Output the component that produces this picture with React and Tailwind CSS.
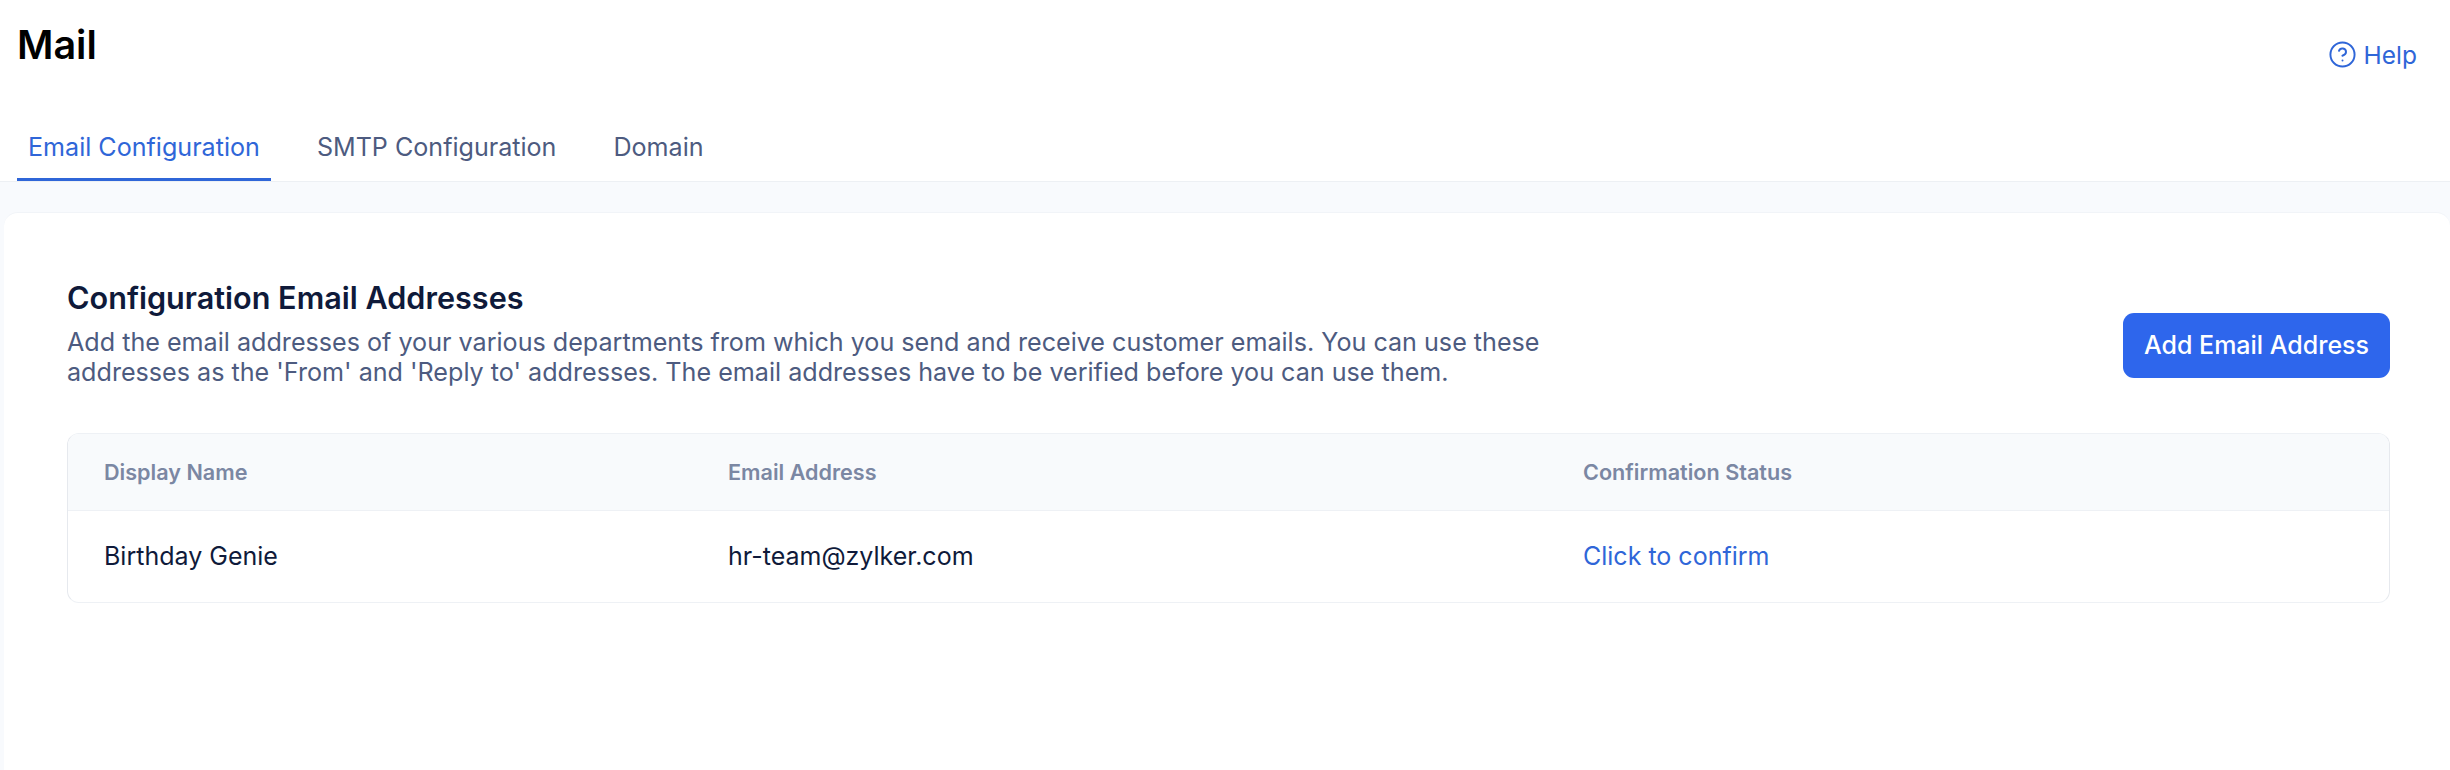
import { CircleHelp } from 'lucide-react'

const tabs = ['Email Configuration', 'SMTP Configuration', 'Domain']

export default function App() {
    return (
        <div className="h-[770px] w-[2450px] overflow-hidden bg-[#f8fafd] font-['Inter',sans-serif]">
            {/* Top header with tabs */}
            <header className="h-[182px] border-b border-[#edf0f4] bg-white pl-[17px] pr-[33px]">
                <div className="flex h-[136px] items-start justify-between">
                    <h1 className="pt-[22px] text-[39.5px] leading-[46px] font-semibold text-black">Mail</h1>
                    <a className="mt-[40px] flex items-center gap-[7px] text-[24.5px] leading-[28px] text-[#2f66d8]">
                        <CircleHelp className="h-[29px] w-[29px]" strokeWidth={1.6} />
                        Help
                    </a>
                </div>
                <nav className="flex h-[45px] gap-[35px]">
                    {tabs.map((tab, i) => (
                        <button
                            key={tab}
                            className={`h-[45px] px-[11px] pb-[23px] text-[25.1px] leading-[23px] ${i === 0 ? 'border-b-[3px] border-[#2f66d8] text-[#2f66d8]' : 'text-[#4d5b80]'}`}
                        >
                            {tab}
                        </button>
                    ))}
                </nav>
            </header>

            {/* Main card */}
            <main className="ml-[4px] mt-[30px] h-[600px] rounded-t-[14px] border-t border-[#f1f4f8] bg-white pl-[63px] pr-[60px]">
                <div className="flex items-start justify-between pt-[67px]">
                    <div>
                        <h2 className="text-[30.6px] leading-[36px] font-semibold text-[#0f1a3a]">Configuration Email Addresses</h2>
                        <p className="mt-[11px] w-[1530px] text-[25.13px] leading-[30px] text-[#4d5b80]">
                            Add the email addresses of your various departments from which you send and receive customer emails. You can use these addresses as the 'From' and 'Reply to' addresses. The email addresses have to be verified before you can use them.
                        </p>
                    </div>
                    <button className="mt-[33px] h-[65px] w-[267px] rounded-[11px] bg-[#2e66ec] text-[25px] font-medium text-white">
                        Add Email Address
                    </button>
                </div>

                {/* Addresses table */}
                <div className="mt-[46px] w-[2323px] overflow-hidden rounded-[12px] border border-x-[#e6e9ee] border-y-[#eef1f5]">
                    <div className="grid h-[77px] grid-cols-[624px_855px_1fr] items-center border-b border-[#eef1f5] bg-[#f8fafc] pl-[36px] text-[21.6px] font-semibold text-[#7b87a3]">
                        <span>Display Name</span>
                        <span>Email Address</span>
                        <span>Confirmation Status</span>
                    </div>
                    <div className="grid h-[91px] grid-cols-[624px_855px_1fr] items-center pl-[36px] text-[25px] text-[#0f1a3a]">
                        <span>Birthday Genie</span>
                        <span>hr-team@zylker.com</span>
                        <a className="text-[#2f66d8]">Click to confirm</a>
                    </div>
                </div>
            </main>
        </div>
    )
}
